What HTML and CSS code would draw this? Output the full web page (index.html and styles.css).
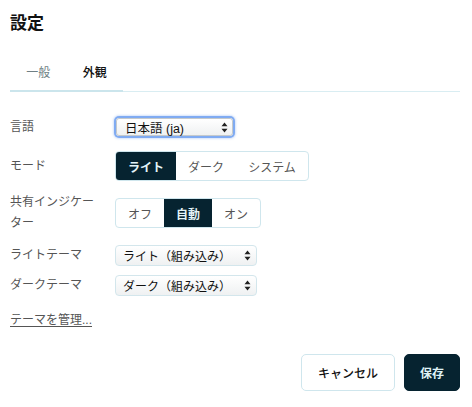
FILE: index.html
```html
<!DOCTYPE html>
<html lang="ja">
<head>
<meta charset="utf-8">
<title>設定</title>
<link rel="stylesheet" href="styles.css">
</head>
<body>
<div class="dialog">
  <h1 class="title">設定</h1>
  <div class="tabs">
    <div class="tablist">
      <span class="tab">一般</span>
      <span class="tab active">外観</span>
    </div>
  </div>

  <div class="row row-lang">
    <div class="label">言語</div>
    <div class="select focus">
      <span class="select-text">日本語 (ja)</span>
      <svg class="arrows" width="7" height="11" viewBox="0 0 7 11"><path d="M3.5 0.5 L6.5 4.2 L0.5 4.2 Z M3.5 10.5 L6.5 6.8 L0.5 6.8 Z" fill="#222"/></svg>
    </div>
  </div>

  <div class="row row-mode">
    <div class="label">モード</div>
    <div class="seg">
      <span class="seg-item active w60">ライト</span>
      <span class="seg-item w60">ダーク</span>
      <span class="seg-item w73">システム</span>
    </div>
  </div>

  <div class="row row-ind">
    <div class="label">共有インジケーター</div>
    <div class="seg">
      <span class="seg-item w48">オフ</span>
      <span class="seg-item active w48">自動</span>
      <span class="seg-item w49">オン</span>
    </div>
  </div>

  <div class="row row-light">
    <div class="label">ライトテーマ</div>
    <div class="select theme">
      <span class="select-text">ライト（組み込み）</span>
      <svg class="arrows" width="7" height="11" viewBox="0 0 7 11"><path d="M3.5 0.5 L6.5 4.2 L0.5 4.2 Z M3.5 10.5 L6.5 6.8 L0.5 6.8 Z" fill="#222"/></svg>
    </div>
  </div>

  <div class="row row-dark">
    <div class="label">ダークテーマ</div>
    <div class="select theme">
      <span class="select-text">ダーク（組み込み）</span>
      <svg class="arrows" width="7" height="11" viewBox="0 0 7 11"><path d="M3.5 0.5 L6.5 4.2 L0.5 4.2 Z M3.5 10.5 L6.5 6.8 L0.5 6.8 Z" fill="#222"/></svg>
    </div>
  </div>

  <a class="manage" href="#">テーマを管理...</a>

  <div class="actions">
    <button class="btn btn-cancel">キャンセル</button>
    <button class="btn btn-save">保存</button>
  </div>
</div>
</body>
</html>
```

FILE: styles.css
```css
html, body {
  margin: 0;
  padding: 0;
  background: #ffffff;
}

body {
  font-family: "Liberation Sans", "Noto Sans CJK JP", sans-serif;
  color: #111;
  font-size: 12px;
}

.dialog {
  width: 450px;
  padding: 12px 12px 0 10px;
  display: flex;
  flex-direction: column;
}

.title {
  margin: 0;
  font-size: 17px;
  line-height: 24px;
  font-weight: bold;
  color: #111;
}

.tabs {
  margin-top: 20px;
  border-bottom: 1px solid #d9edf2;
  display: flex;
}

.tablist {
  display: flex;
  border-bottom: 2px solid #cbe5ec;
  margin-bottom: -1px;
}

.tab {
  width: 56.5px;
  text-align: center;
  padding: 8px 0;
  line-height: 18px;
  color: #6f7f84;
}

.tab.active {
  color: #111;
  font-weight: 500;
}

.row {
  display: flex;
  align-items: center;
}

.label {
  width: 90px;
  margin-right: 15px;
  color: #555;
  line-height: 21px;
  flex-shrink: 0;
}

.row-lang { margin-top: 24px; height: 22px; }
.row-mode { margin-top: 13px; height: 30px; }
.row-ind { margin-top: 11px; height: 42px; }
.row-light { margin-top: 11px; height: 21px; }
.row-dark { margin-top: 9px; height: 21px; }

.select {
  display: flex;
  align-items: center;
  justify-content: space-between;
  box-sizing: border-box;
  border: 1px solid #d3e6ec;
  border-radius: 4px;
  background: linear-gradient(#ffffff, #eff1f2);
  color: #111;
  font-size: 12px;
  text-spacing-trim: space-all;
}

.select.focus {
  width: 117px;
  height: 18px;
  margin-left: 1px;
  padding: 0 4px 0 8px;
  font-size: 12.5px;
  border-color: #c4c9cc;
  box-shadow: 0 0 0 2px #80abf2, 0 0 2px 3px rgba(128, 171, 242, 0.35);
  border-radius: 3px;
}

.select.theme {
  width: 142px;
  height: 21px;
  padding: 0 5px 0 7px;
}

.arrows {
  display: block;
  flex-shrink: 0;
}

.seg {
  display: flex;
  height: 30px;
  box-sizing: border-box;
  border: 1px solid #cfe6ed;
  border-radius: 4px;
  overflow: hidden;
}

.seg-item {
  display: flex;
  align-items: center;
  justify-content: center;
  color: #555;
  font-size: 12px;
}

.seg-item.active {
  background: #062330;
  color: #e4f4f8;
  font-weight: bold;
}

.w60 { width: 60px; }
.w73 { width: 72px; }
.w48 { width: 48px; }
.w49 { width: 48px; }

.manage {
  margin-top: 16px;
  align-self: flex-start;
  color: #555;
  line-height: 16px;
  text-decoration: underline;
  text-underline-offset: 2px;
}

.actions {
  margin-top: 26px;
  display: flex;
  justify-content: flex-end;
  gap: 9px;
}

.btn {
  height: 37px;
  font-family: inherit;
  font-size: 12px;
  border-radius: 5px;
  cursor: pointer;
}

.btn-cancel {
  width: 94px;
  background: #fff;
  border: 1px solid #cfe6ed;
  color: #111;
  font-weight: 500;
}

.btn-save {
  width: 56px;
  background: #062330;
  border: 1px solid #062330;
  color: #dff2f6;
  font-weight: bold;
}
```
